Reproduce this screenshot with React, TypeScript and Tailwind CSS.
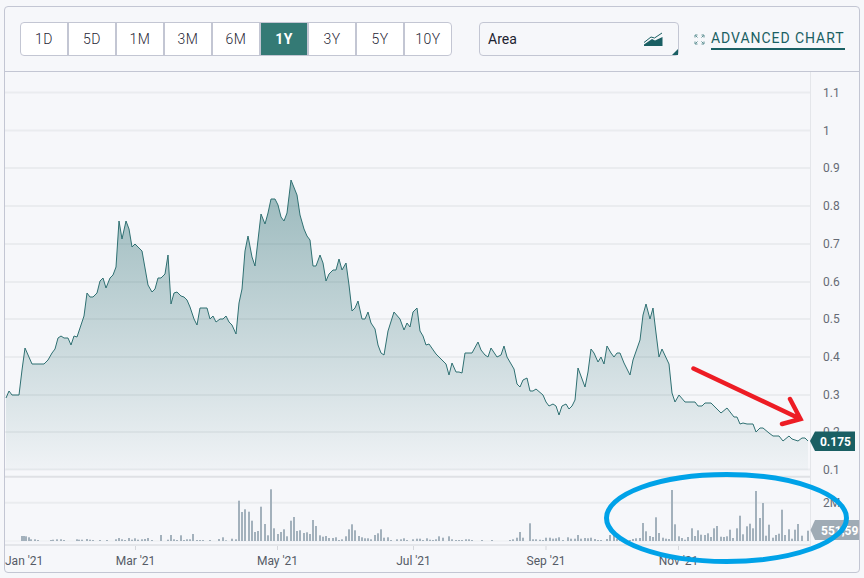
const ranges = ['1D', '5D', '1M', '3M', '6M', '1Y', '3Y', '5Y', '10Y'];

const yLabels: [string, number][] = [
  ['1.1', 92],
  ['1', 130],
  ['0.9', 167.5],
  ['0.8', 205.5],
  ['0.7', 243.5],
  ['0.6', 281.5],
  ['0.5', 318.5],
  ['0.4', 356.5],
  ['0.3', 394.5],
  ['0.2', 431.5],
  ['0.1', 469.5],
];

const xLabels: [string, number][] = [
  ["Mar '21", 135.5],
  ["May '21", 277.5],
  ["Jul '21", 413.5],
  ["Sep '21", 546],
  ["Nov '21", 678.5],
];

// traced from the picture, page coordinates
const line =
  '6,398 9,391 12,395 19,395 22,370 25,348 32,364 44,364 48,360 52,353 55,349 58,338 61,336 64,338 68,338 71,345 74,336 77,337 84,316 87,293 90,297 93,297 97,293 100,281 103,278 106,288 110,278 113,275 116,267 119,221 122,239 126,221 129,229 132,247 135,244 142,251 148,285 152,292 155,289 158,278 161,278 165,274 168,255 171,304 174,293 177,292 181,296 184,297 187,300 190,307 194,319 197,325 200,308 207,308 210,319 213,316 216,322 220,319 223,319 226,316 229,322 232,325 236,334 239,303 242,289 245,251 248,236 252,257 255,266 261,214 265,224 268,213 271,199 275,199 278,205 281,217 284,221 287,213 291,180 297,195 300,215 304,229 307,236 310,240 313,266 316,266 320,255 323,263 326,281 329,274 333,270 336,270 339,259 342,270 346,263 349,285 352,311 355,308 358,301 362,319 365,319 368,312 371,323 375,329 378,345 381,353 384,355 388,331 394,312 400,319 404,330 407,323 410,327 413,312 417,308 420,331 423,336 426,345 429,344 436,354 439,357 446,364 449,375 452,363 456,372 459,372 462,373 465,353 472,353 478,342 481,350 485,355 488,357 491,348 497,357 501,355 504,346 507,357 514,369 517,384 520,387 523,380 527,378 530,391 533,391 536,389 543,395 546,402 549,406 553,404 556,406 559,415 562,406 566,404 569,409 572,406 575,400 578,368 585,387 588,372 591,349 594,353 598,362 601,357 604,364 607,346 611,353 614,357 617,353 620,353 624,363 630,375 633,360 640,340 643,315 646,304 650,319 653,308 656,333 659,357 662,349 669,364 672,393 675,402 679,395 685,402 695,402 698,406 702,406 705,403 711,403 721,413 727,408 734,417 737,417 740,424 743,423 747,424 753,424 756,432 760,428 763,428 769,433 773,436 779,436 783,441 789,436 792,439 798,441 802,438 805,438 808,441';

const bars: [number, number][] = [
  [22, 5], [24, 5], [26, 4.7], [29, 3.7], [31, 1.7], [35, 1.7], [38, 1], [51, 1], [53, 1.3], [57, 1.7], [61, 1.7], [64, 1],
  [77, 1.7], [79, 1.3], [82, 1.3], [87, 2], [90, 1.3], [93, 1], [100, 1], [107, 1], [116, 1.7], [119, 3], [122, 1.7], [125, 1],
  [129, 3], [132, 1.3], [135, 2.7], [138, 1.3], [142, 1.7], [145, 2], [148, 3], [152, 1], [161, 6], [168, 1.3], [171, 6], [174, 1.7],
  [177, 1], [181, 5.7], [184, 1], [187, 1.7], [190, 1.7], [193, 7], [197, 1], [200, 1], [203, 1], [210, 1], [219, 2], [223, 3.7],
  [226, 0.7], [232, 2.3], [236, 1.7], [239, 40.3], [242, 29], [245, 31.7], [249, 29.3], [252, 20.3], [255, 9], [258, 10], [261, 34.3],
  [265, 17], [268, 5.7], [271, 51.7], [274, 12.7], [278, 7], [281, 9], [284, 11.7], [287, 4.7], [291, 20.3], [294, 24], [297, 10],
  [300, 10.7], [304, 8], [307, 8.7], [310, 7], [313, 21], [316, 15], [320, 5.7], [323, 4.3], [326, 5], [329, 3], [333, 3], [336, 3.7],
  [339, 1], [342, 1.7], [346, 4.7], [349, 11.7], [352, 16.7], [355, 10.7], [359, 5], [362, 3.7], [365, 2.7], [368, 2.7], [371, 1.7],
  [375, 6], [378, 7.7], [381, 11.7], [384, 3.3], [388, 3.7], [391, 1], [397, 1.7], [401, 1.7], [404, 2.7], [407, 1], [413, 1.7],
  [417, 2.3], [420, 2.3], [423, 1], [427, 2.7], [430, 1.3], [433, 1], [436, 1.7], [439, 4.7], [443, 3.3], [449, 4.7], [452, 1.7],
  [456, 1], [459, 1], [462, 1], [466, 1.7], [469, 1.7], [472, 1], [482, 1], [492, 1], [510, 1], [513, 1.7], [517, 3.3], [520, 9],
  [523, 3.3], [530, 17.7], [533, 1.7], [536, 1.7], [540, 1.3], [543, 1], [546, 3.3], [550, 3.3], [553, 2.3], [556, 2.7], [559, 3.7],
  [563, 1], [568, 3.7], [571, 2.3], [575, 2.3], [578, 6], [581, 2.3], [585, 3], [588, 2.7], [591, 3.3], [595, 2], [598, 1], [601, 1],
  [607, 2], [610, 6], [614, 6.7], [617, 2.3], [620, 1.7], [623, 1.3], [627, 1], [630, 1], [633, 2], [636, 2.7], [640, 3], [643, 18],
  [646, 9.7], [650, 5], [653, 4], [656, 23.7], [659, 8], [663, 3.3], [666, 2.3], [669, 2], [672, 51], [675, 16.7], [679, 4.7],
  [682, 3], [685, 1.3], [688, 4], [692, 12.7], [695, 5], [698, 10.7], [701, 6.3], [705, 6], [708, 7.7], [711, 4], [714, 12.7],
  [717, 15], [721, 4.3], [724, 4], [727, 4.7], [730, 11.3], [733, 3], [737, 12.7], [740, 25.3], [743, 6.7],
  [747, 14.7], [750, 17.3], [753, 12.7], [756, 50], [760, 23], [763, 38], [766, 5.3], [769, 16.3], [773, 3.3], [776, 6], [779, 7.3],
  [782, 31.3], [785, 6], [789, 11.7], [792, 2.3], [795, 11.3], [798, 17], [802, 5.3], [808, 10.3],
];

const gridY = [92.5, 130.5, 168, 206, 244, 282, 319, 357, 395, 432, 469.5];
const font = { fontFamily: 'Roboto, sans-serif' };

export default function App() {
  return (
    <div className="w-[864px] h-[578px] bg-[#f6f7fa] pt-[6px] pl-[4px] font-['Roboto',sans-serif]">
      <div className="w-[856px] h-[567px] flex flex-col border border-[#c3c6d3] rounded-[4px] overflow-hidden">
        <div className="h-[65px] shrink-0 flex items-center pl-[15px] border-b border-[#c3c6d3]">
          <div className="flex h-[34px] border border-[#c3c6d3] rounded-[4px] overflow-hidden bg-white">
            {ranges.map((r, i) => (
              <div
                key={r}
                className={
                  r === '1Y'
                    ? 'w-[48px] flex items-center justify-center text-[14px] font-bold tracking-[0.5px] text-white bg-[#347a75] border-r-2 border-[#c3c6d3]'
                    : i === ranges.length - 1
                      ? 'w-[46px] flex items-center justify-center text-[14px] font-light tracking-[0.5px] text-[#1f2636]'
                      : 'w-[48px] flex items-center justify-center text-[14px] font-light tracking-[0.5px] text-[#1f2636] border-r-2 border-[#c3c6d3]'
                }
              >
                {r}
              </div>
            ))}
          </div>
          <div className="relative ml-[27px] w-[200px] h-[34px] flex items-center justify-between pl-[8px] pr-[15px] border border-[#c3c6d3] rounded-[4px] text-[14px] text-[#1d2230]">
            <span>Area</span>
            <svg width="19" height="15" viewBox="0 0 19 15">
              <path d="M0 10.5 7 5l3.5 1L18 1" fill="none" stroke="#1a5f63" strokeWidth="1" />
              <path d="M0 14v-1.5L8 7l3 1.5L18.500 5v9z" fill="#1a5f63" />
            </svg>
            <div className="absolute right-0 bottom-0 w-0 h-0 border-l-[6px] border-l-transparent border-b-[6px] border-b-[#1a5f63]" />
          </div>
          <svg className="ml-[15px]" width="11" height="11" viewBox="0 0 11 11" fill="none" stroke="#5f9093" strokeWidth="1">
            <path d="M1 3.500V1h2.500M1.500 1.500l2 2M10 3.500V1H7.500M9.500 1.500l-2 2M1 7.500V10h2.500M1.500 9.500l2-2M10 7.500V10H7.500M9.500 9.500l-2-2" />
          </svg>
          <div className="ml-[6px] border-b-2 border-[#1a5f63] text-[14px] leading-[20px] tracking-[0.95px] text-[#1a5f63] whitespace-nowrap">
            ADVANCED CHART
          </div>
        </div>
        <div className="flex-1 relative">
          <svg width="854" height="500" viewBox="5 72 854 500" className="block" style={font}>
            <defs>
              <linearGradient id="areaFill" gradientUnits="userSpaceOnUse" x1="0" y1="180" x2="0" y2="470">
                <stop offset="0" stopColor="#1a6266" stopOpacity="0.42" />
                <stop offset="1" stopColor="#1a6266" stopOpacity="0.03" />
              </linearGradient>
            </defs>
            {gridY.map((y) => (
              <line key={y} x1="5" x2="810" y1={y} y2={y} stroke="#eaecef" strokeWidth="2" />
            ))}
            <line x1="5" x2="810" y1="476.7" y2="476.7" stroke="#dfe1e5" strokeWidth="2" />
            <line x1="5" x2="810" y1="502.7" y2="502.7" stroke="#eaecef" strokeWidth="2" />
            <line x1="5" x2="810" y1="541" y2="541" stroke="#eceef1" strokeWidth="1" />
            <line x1="5" x2="810" y1="545" y2="545" stroke="#e4e6ea" strokeWidth="2" />
            <line x1="810.500" x2="810.500" y1="72" y2="546" stroke="#e4e6ea" strokeWidth="1" />

            <polygon points={`6,470 ${line} 808,470`} fill="url(#areaFill)" />
            <polyline points={line} fill="none" stroke="#2f7072" strokeWidth="1" strokeLinejoin="round" />

            {bars.map(([x, h], i) => (
              <rect key={i} x={x - 1} y={541 - h} width="2" height={h} fill="#a3b1bc" />
            ))}

            {xLabels.map(([label, x]) => (
              <g key={label}>
                <line x1={x} x2={x} y1="546" y2="550" stroke="#d5d7dc" />
                <text x={x} y="565" textAnchor="middle" fontSize="12" fill="#555b66">
                  {label}
                </text>
              </g>
            ))}
            <text x="5" y="565" fontSize="12" fill="#555b66">
              Jan '21
            </text>

            {yLabels.map(([label, y]) => (
              <text key={label} x="823" y={y + 4.500} fontSize="12" fill="#666b75">
                {label}
              </text>
            ))}
            <text x="823" y="507" fontSize="12" fill="#666b75">
              2M
            </text>

            <polygon points="810,441 815,431.500 855,431.500 855,451 815,451" fill="#1a5f63" />
            <text x="835.500" y="446" textAnchor="middle" fontSize="12" fontWeight="700" fill="#fff">
              0.175
            </text>
            <polygon points="810.500,530 815,520 860,520 860,540 815,540" fill="#9fabb5" />
            <text x="821" y="535" fontSize="12" fontWeight="700" fill="#fff">
              551,598
            </text>

            {/* hand drawn notes on top of the chart */}
            <path d="M693.500 368.500 800.500 419M790 399l10.500 20-18.500 5" fill="none" stroke="#ed1c24" strokeWidth="4.500" strokeLinecap="round" strokeLinejoin="miter" />
            <ellipse cx="726.500" cy="518" rx="120" ry="43.500" fill="none" stroke="#00a2e8" strokeWidth="5" />
          </svg>
        </div>
      </div>
    </div>
  );
}
